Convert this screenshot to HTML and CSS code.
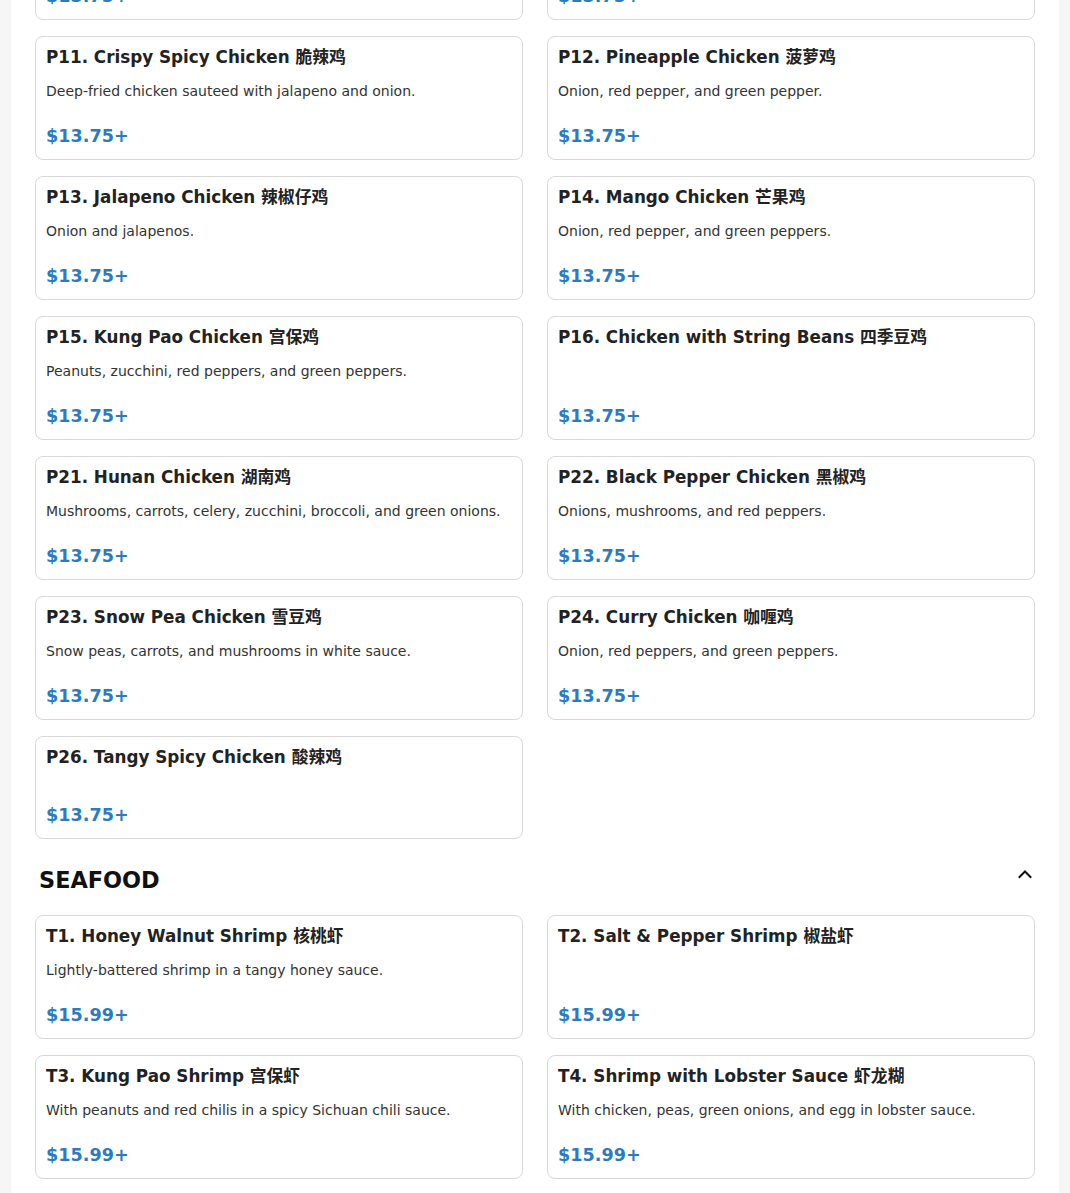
FILE: index.html
```html
<!DOCTYPE html>
<html lang="en">
<head>
<meta charset="utf-8">
<title>Menu</title>
<link rel="stylesheet" href="styles.css">
</head>
<body>
<main class="page">
  <section class="section section-first">
    <div class="grid">
      <article class="card">
        <h3 class="item-title">P9. Orange Chicken 陈皮鸡</h3>
        <p class="item-desc">Crispy chicken in a tangy orange sauce.</p>
        <div class="item-price">$13.75+</div>
      </article>
      <article class="card">
        <h3 class="item-title">P10. Sesame Chicken 芝麻鸡</h3>
        <p class="item-desc">Topped with sesame seeds.</p>
        <div class="item-price">$13.75+</div>
      </article>
      <article class="card">
        <h3 class="item-title">P11. Crispy Spicy Chicken 脆辣鸡</h3>
        <p class="item-desc">Deep-fried chicken sauteed with jalapeno and onion.</p>
        <div class="item-price">$13.75+</div>
      </article>
      <article class="card">
        <h3 class="item-title">P12. Pineapple Chicken 菠萝鸡</h3>
        <p class="item-desc">Onion, red pepper, and green pepper.</p>
        <div class="item-price">$13.75+</div>
      </article>
      <article class="card">
        <h3 class="item-title">P13. Jalapeno Chicken 辣椒仔鸡</h3>
        <p class="item-desc">Onion and jalapenos.</p>
        <div class="item-price">$13.75+</div>
      </article>
      <article class="card">
        <h3 class="item-title">P14. Mango Chicken 芒果鸡</h3>
        <p class="item-desc">Onion, red pepper, and green peppers.</p>
        <div class="item-price">$13.75+</div>
      </article>
      <article class="card">
        <h3 class="item-title">P15. Kung Pao Chicken 宫保鸡</h3>
        <p class="item-desc">Peanuts, zucchini, red peppers, and green peppers.</p>
        <div class="item-price">$13.75+</div>
      </article>
      <article class="card">
        <h3 class="item-title">P16. Chicken with String Beans 四季豆鸡</h3>
        <div class="item-price">$13.75+</div>
      </article>
      <article class="card">
        <h3 class="item-title">P21. Hunan Chicken 湖南鸡</h3>
        <p class="item-desc">Mushrooms, carrots, celery, zucchini, broccoli, and green onions.</p>
        <div class="item-price">$13.75+</div>
      </article>
      <article class="card">
        <h3 class="item-title">P22. Black Pepper Chicken 黑椒鸡</h3>
        <p class="item-desc">Onions, mushrooms, and red peppers.</p>
        <div class="item-price">$13.75+</div>
      </article>
      <article class="card">
        <h3 class="item-title">P23. Snow Pea Chicken 雪豆鸡</h3>
        <p class="item-desc">Snow peas, carrots, and mushrooms in white sauce.</p>
        <div class="item-price">$13.75+</div>
      </article>
      <article class="card">
        <h3 class="item-title">P24. Curry Chicken 咖喱鸡</h3>
        <p class="item-desc">Onion, red peppers, and green peppers.</p>
        <div class="item-price">$13.75+</div>
      </article>
      <article class="card">
        <h3 class="item-title">P26. Tangy Spicy Chicken 酸辣鸡</h3>
        <div class="item-price">$13.75+</div>
      </article>
    </div>
  </section>

  <section class="section">
    <header class="section-header">
      <h2 class="section-title">SEAFOOD</h2>
      <svg class="chevron" width="20" height="20" viewBox="0 0 20 20" aria-hidden="true">
        <path d="M4.5 13 L10 7.5 L15.5 13" fill="none" stroke="#111" stroke-width="2" stroke-linecap="square" stroke-linejoin="miter"/>
      </svg>
    </header>
    <div class="grid">
      <article class="card">
        <h3 class="item-title">T1. Honey Walnut Shrimp 核桃虾</h3>
        <p class="item-desc">Lightly-battered shrimp in a tangy honey sauce.</p>
        <div class="item-price">$15.99+</div>
      </article>
      <article class="card">
        <h3 class="item-title">T2. Salt &amp; Pepper Shrimp 椒盐虾</h3>
        <div class="item-price">$15.99+</div>
      </article>
      <article class="card">
        <h3 class="item-title">T3. Kung Pao Shrimp 宫保虾</h3>
        <p class="item-desc">With peanuts and red chilis in a spicy Sichuan chili sauce.</p>
        <div class="item-price">$15.99+</div>
      </article>
      <article class="card">
        <h3 class="item-title">T4. Shrimp with Lobster Sauce 虾龙糊</h3>
        <p class="item-desc">With chicken, peas, green onions, and egg in lobster sauce.</p>
        <div class="item-price">$15.99+</div>
      </article>
    </div>
  </section>
</main>
</body>
</html>
```

FILE: styles.css
```css
html, body {
  margin: 0;
  padding: 0;
}

body {
  background: #f6f6f6;
  font-family: "DejaVu Sans", "Noto Sans CJK SC", sans-serif;
  color: #222;
}

.page {
  max-width: 1000px;
  margin: 0 auto;
  padding: 0 24px 40px;
  background: #ffffff;
  min-height: 1300px;
}

.section-first {
  margin-top: -104px;
}

.grid {
  display: grid;
  grid-template-columns: 1fr 1fr;
  column-gap: 24px;
  row-gap: 16px;
}

.card {
  display: flex;
  flex-direction: column;
  padding: 10px 10px 12px;
  border: 1px solid #d8d8d8;
  border-radius: 8px;
  background: #fff;
}

.item-title {
  margin: 0 0 14px;
  font-size: 16.8px;
  line-height: 20px;
  font-weight: bold;
  color: #222;
}

.item-desc {
  margin: 0;
  font-size: 14px;
  line-height: 21px;
  color: #333;
}

.item-price {
  margin-top: auto;
  padding-top: 24px;
  font-size: 17.6px;
  line-height: 21px;
  font-weight: bold;
  color: #2a7bc2;
}

.section-header {
  display: flex;
  align-items: center;
  justify-content: space-between;
  height: 27px;
  margin: 28px 0 21px;
  padding-left: 4px;
}

.section-title {
  margin: 0;
  font-size: 22.4px;
  line-height: 27px;
  font-weight: bold;
  color: #111;
}

.chevron {
  display: block;
  margin-bottom: 14px;
}
```
